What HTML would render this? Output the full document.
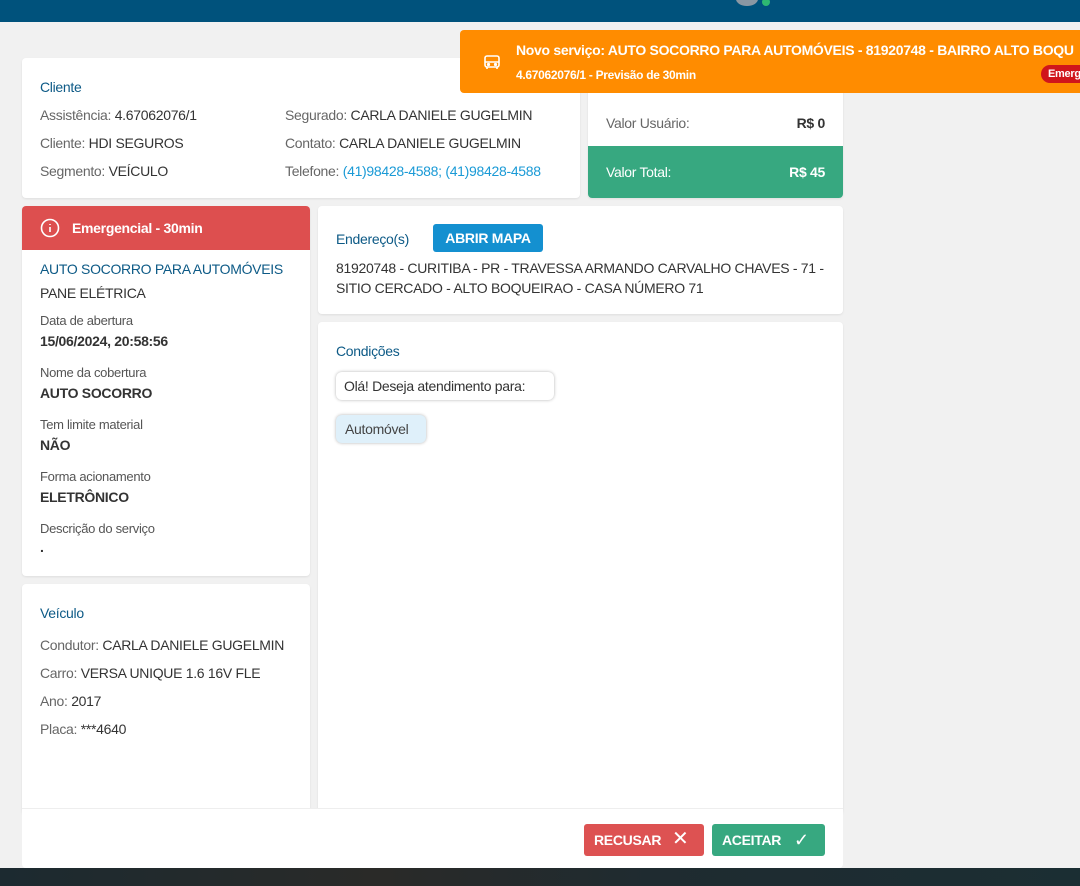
<!DOCTYPE html><html><head><style>
*{box-sizing:border-box;margin:0;padding:0}
body{width:1080px;height:886px;background:#f1f1f1;font-family:"Liberation Sans",sans-serif;font-size:14px;color:#333;position:relative;overflow:hidden;letter-spacing:-0.3px}
.a{position:absolute}
.card{position:absolute;background:#fff;border-radius:4px;box-shadow:0 1px 2px rgba(0,0,0,.08)}
.t{color:#0d5a86;font-size:14px}
.g{color:#666}
.lbl{font-size:13px;color:#555}
.val{font-weight:bold;font-size:14px;color:#333}
</style></head><body>
<div class="a" style="left:0;top:0;width:1080px;height:22px;background:#00527c"></div>
<div class="a" style="left:736px;top:-8px;width:22px;height:14px;border-radius:50%;background:#8a97a3"></div>
<div class="a" style="left:762px;top:-2px;width:8px;height:8px;border-radius:50%;background:#2eb872"></div>

<div class="card" style="left:22px;top:58px;width:558px;height:140px">
<div class="a t" style="left:18px;top:21px">Cliente</div>
<div class="a" style="left:18px;top:49px"><span class="g">Assistência:</span> 4.67062076/1</div>
<div class="a" style="left:18px;top:77px"><span class="g">Cliente:</span> HDI SEGUROS</div>
<div class="a" style="left:18px;top:105px"><span class="g">Segmento:</span> VEÍCULO</div>
<div class="a" style="left:263px;top:49px"><span class="g">Segurado:</span> CARLA DANIELE GUGELMIN</div>
<div class="a" style="left:263px;top:77px"><span class="g">Contato:</span> CARLA DANIELE GUGELMIN</div>
<div class="a" style="left:263px;top:105px"><span class="g">Telefone:</span> <span style="color:#1a9ad6">(41)98428-4588; (41)98428-4588</span></div>
</div>

<div class="card" style="left:588px;top:58px;width:255px;height:140px;overflow:hidden">
<div class="a g" style="left:18px;top:57px">Valor Usuário:</div>
<div class="a val" style="right:18px;top:57px">R$ 0</div>
<div class="a" style="left:0;top:88px;width:255px;height:52px;background:#37a880;color:#fff">
<div class="a" style="left:18px;top:18px">Valor Total:</div>
<div class="a" style="right:18px;top:18px;font-weight:bold">R$ 45</div></div>
</div>

<div class="a" style="left:460px;top:30px;width:630px;height:63px;background:#ff8c00;border-radius:4px;color:#fff">
<svg class="a" style="left:22px;top:22px" width="20" height="20" viewBox="0 0 20 20" fill="none" stroke="#fff" stroke-width="1.6"><rect x="3" y="4" width="14" height="11" rx="2"/><path d="M3 10h14M5 15v2M15 15v2"/><circle cx="6.5" cy="12.5" r=".8" fill="#fff"/><circle cx="13.5" cy="12.5" r=".8" fill="#fff"/></svg>
<div class="a" style="left:56px;top:12px;font-weight:bold;font-size:14px;white-space:nowrap">Novo serviço: AUTO SOCORRO PARA AUTOMÓVEIS - 81920748 - BAIRRO ALTO BOQU</div>
<div class="a" style="left:56px;top:38px;font-size:12px;font-weight:bold">4.67062076/1 - Previsão de 30min</div>
<div class="a" style="left:581px;top:35px;width:60px;height:18px;border-radius:9px;background:#d0151b;font-size:11px;font-weight:bold;padding:3px 7px">Emerg</div>
</div>

<div class="card" style="left:22px;top:206px;width:288px;height:370px;overflow:hidden">
<div class="a" style="left:0;top:0;width:288px;height:44px;background:#dd4f4f;color:#fff;font-weight:bold">
<svg class="a" style="left:18px;top:12px" width="20" height="20" viewBox="0 0 20 20" fill="none" stroke="#fff" stroke-width="1.6"><circle cx="10" cy="10" r="8.5"/><path d="M10 9v5M10 6v1"/></svg>
<div class="a" style="left:50px;top:14px">Emergencial - 30min</div></div>
<div class="a t" style="left:18px;top:55px">AUTO SOCORRO PARA AUTOMÓVEIS</div>
<div class="a" style="left:18px;top:79px">PANE ELÉTRICA</div>
<div class="a lbl" style="left:18px;top:107px">Data de abertura</div><div class="a val" style="left:18px;top:127px">15/06/2024, 20:58:56</div>
<div class="a lbl" style="left:18px;top:159px">Nome da cobertura</div><div class="a val" style="left:18px;top:179px">AUTO SOCORRO</div>
<div class="a lbl" style="left:18px;top:211px">Tem limite material</div><div class="a val" style="left:18px;top:231px">NÃO</div>
<div class="a lbl" style="left:18px;top:263px">Forma acionamento</div><div class="a val" style="left:18px;top:283px">ELETRÔNICO</div>
<div class="a lbl" style="left:18px;top:315px">Descrição do serviço</div><div class="a val" style="left:18px;top:333px">.</div>
</div>

<div class="card" style="left:22px;top:584px;width:288px;height:230px">
<div class="a t" style="left:18px;top:21px">Veículo</div>
<div class="a" style="left:18px;top:53px"><span class="g">Condutor:</span> CARLA DANIELE GUGELMIN</div>
<div class="a" style="left:18px;top:81px"><span class="g">Carro:</span> VERSA UNIQUE 1.6 16V FLE</div>
<div class="a" style="left:18px;top:109px"><span class="g">Ano:</span> 2017</div>
<div class="a" style="left:18px;top:137px"><span class="g">Placa:</span> ***4640</div>
</div>

<div class="card" style="left:318px;top:206px;width:525px;height:108px">
<div class="a t" style="left:18px;top:25px">Endereço(s)</div>
<div class="a" style="left:115px;top:18px;width:110px;height:28px;background:#1490d0;color:#fff;font-weight:bold;border-radius:3px;text-align:center;line-height:28px">ABRIR MAPA</div>
<div class="a" style="left:18px;top:52px;line-height:20px;width:500px">81920748 - CURITIBA - PR - TRAVESSA ARMANDO CARVALHO CHAVES - 71 -<br>SITIO CERCADO - ALTO BOQUEIRAO - CASA NÚMERO 71</div>
</div>

<div class="card" style="left:318px;top:322px;width:525px;height:492px">
<div class="a t" style="left:18px;top:21px">Condições</div>
<div class="a" style="left:18px;top:50px;height:28px;width:218px;padding:0 8px;line-height:28px;border-radius:6px;box-shadow:0 0 3px rgba(0,0,0,.3);background:#fff">Olá! Deseja atendimento para:</div>
<div class="a" style="left:18px;top:93px;height:28px;width:90px;padding:0 9px;line-height:28px;border-radius:6px;background:#dff0fa;box-shadow:0 0 3px rgba(0,0,0,.3);color:#444">Automóvel</div>
</div>

<div class="a" style="left:22px;top:808px;width:821px;height:60px;background:#fff;border-top:1px solid #eee;border-radius:0 0 4px 4px">
<div class="a" style="left:562px;top:15px;width:120px;height:32px;background:#dd5252;border-radius:3px;color:#fff;font-weight:bold;line-height:32px;padding-left:10px">RECUSAR <span style="font-weight:normal;font-size:20px;position:absolute;left:88px;top:-1px">✕</span></div>
<div class="a" style="left:690px;top:15px;width:113px;height:32px;background:#37a880;border-radius:3px;color:#fff;font-weight:bold;line-height:32px;padding-left:10px">ACEITAR <span style="font-weight:normal;font-size:18px;position:absolute;left:82px;top:0">✓</span></div>
</div>

<div class="a" style="left:0;top:868px;width:1080px;height:18px;background:linear-gradient(90deg,#1c2a30,#2a2a28 35%,#1f2b30 60%,#1b2e33)"></div>
</body></html>
